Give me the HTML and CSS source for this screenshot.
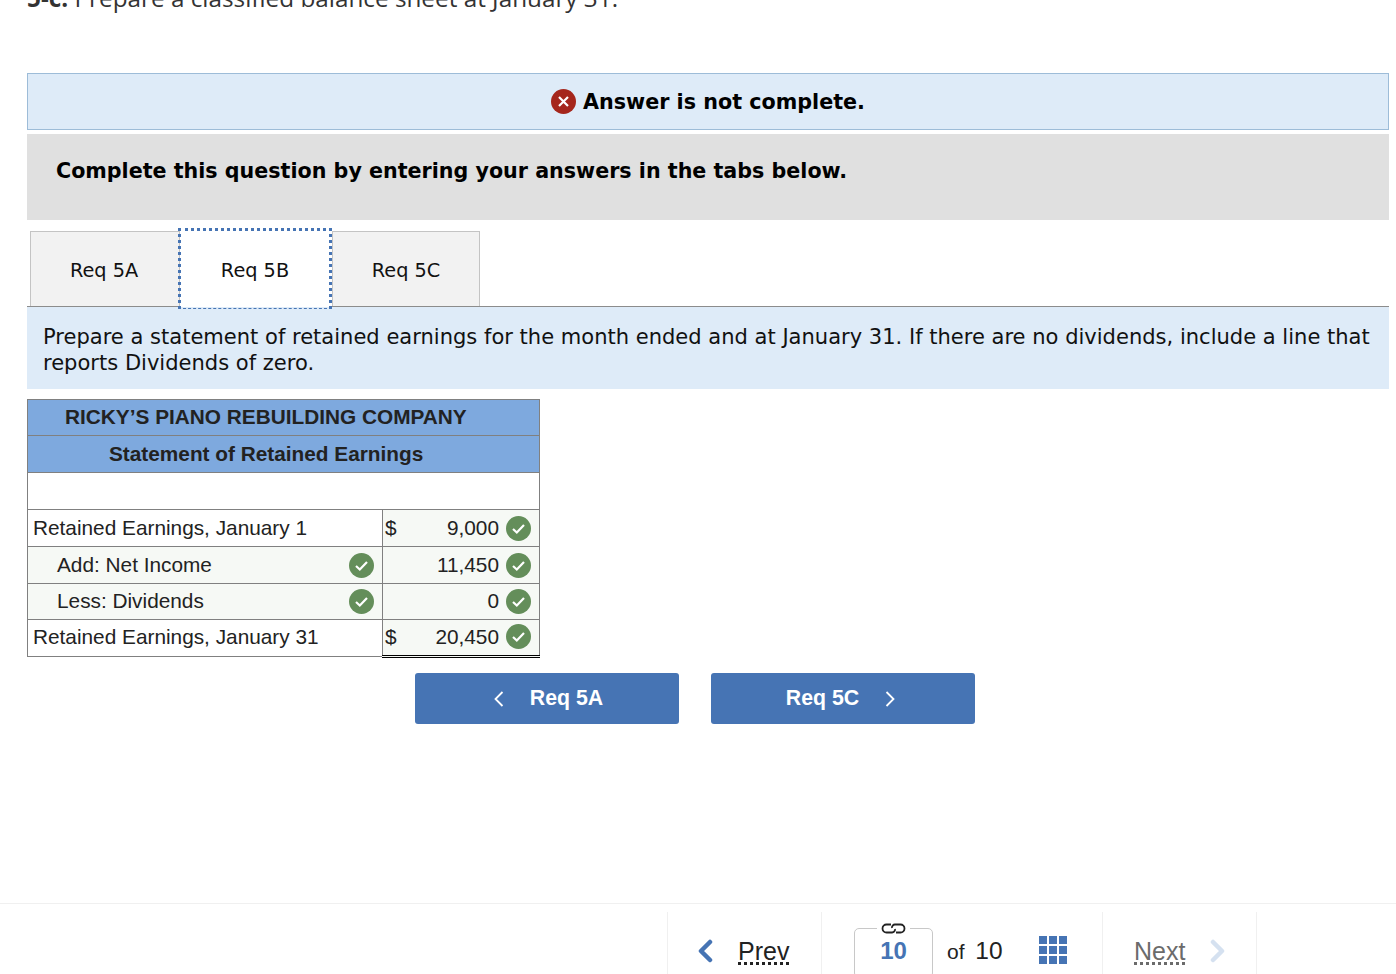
FILE: index.html
```html
<!DOCTYPE html>
<html>
<head>
  <title>Req 5B</title>
  <link rel="stylesheet" href="styles.css">
</head>
<body>

<div class="content">
  <p class="question"><b>5-c.</b> Prepare a classified balance sheet at January 31.</p>

  <div class="banner">
    <svg class="status-icon" width="25" height="25" viewBox="0 0 25 25">
      <circle cx="12.5" cy="12.5" r="12.5" fill="#a5261c"/>
      <path d="M8 8l9 9M17 8l-9 9" stroke="#fff" stroke-width="2.2" fill="none"/>
    </svg>
    <span>Answer is not complete.</span>
  </div>

  <div class="prompt">Complete this question by entering your answers in the tabs below.</div>

  <div class="tabs">
    <div class="tab">Req 5A</div>
    <div class="tab active">Req 5B</div>
    <div class="tab">Req 5C</div>
  </div>

  <div class="instructions">Prepare a statement of retained earnings for the month ended and at January 31. If there are no dividends, include a line that reports Dividends of zero.</div>

  <table class="statement">
    <colgroup>
      <col class="col-label">
      <col class="col-amount">
    </colgroup>
    <tr class="head head-1"><th colspan="2"><span class="company">RICKY’S PIANO REBUILDING COMPANY</span></th></tr>
    <tr class="head head-2"><th colspan="2"><span class="title">Statement of Retained Earnings</span></th></tr>
    <tr class="blank"><td colspan="2"></td></tr>
    <tr>
      <td class="label">Retained Earnings, January 1</td>
      <td class="amount tint"><div class="amount-in"><span class="cur">$</span><span class="num">9,000</span><svg class="ok" viewBox="0 0 25 25"><use href="#check"/></svg></div></td>
    </tr>
    <tr class="tint">
      <td class="label indent"><div class="label-in"><span>Add: Net Income</span><svg class="ok" viewBox="0 0 25 25"><use href="#check"/></svg></div></td>
      <td class="amount"><div class="amount-in"><span class="num">11,450</span><svg class="ok" viewBox="0 0 25 25"><use href="#check"/></svg></div></td>
    </tr>
    <tr class="tint short">
      <td class="label indent"><div class="label-in"><span>Less: Dividends</span><svg class="ok" viewBox="0 0 25 25"><use href="#check"/></svg></div></td>
      <td class="amount"><div class="amount-in"><span class="num">0</span><svg class="ok" viewBox="0 0 25 25"><use href="#check"/></svg></div></td>
    </tr>
    <tr class="last">
      <td class="label"><span>Retained Earnings, January 31</span></td>
      <td class="amount tint total"><div class="amount-in"><span class="cur">$</span><span class="num">20,450</span><svg class="ok" viewBox="0 0 25 25"><use href="#check"/></svg></div></td>
    </tr>
  </table>

  <div class="req-nav">
    <button class="req-btn back">
      <svg width="10" height="16" viewBox="0 0 10 16"><path d="M8.5 1L1.5 8l7 7" stroke="#fff" stroke-width="1.8" fill="none"/></svg>
      <span>Req 5A</span>
    </button>
    <button class="req-btn forward">
      <span>Req 5C</span>
      <svg width="10" height="16" viewBox="0 0 10 16"><path d="M1.5 1l7 7-7 7" stroke="#fff" stroke-width="1.8" fill="none"/></svg>
    </button>
  </div>
</div>

<footer class="pager">
  <div class="pager-cell prev">
    <svg width="16" height="24" viewBox="0 0 16 24"><path d="M13 3L4 12l9 9" stroke="#4674b4" stroke-width="4.5" stroke-linecap="round" stroke-linejoin="round" fill="none"/></svg>
    <span class="pager-link">Prev</span>
  </div>
  <div class="pager-cell pages">
    <div class="page-box">
      <svg class="link-icon" width="33" height="13" viewBox="0 0 33 13"><path d="M14 2.500H9.500a4 4 0 0 0 0 8H15a3 3 0 0 0 3-3.500M19 10.500h4.500a4 4 0 0 0 0-8H18a3 3 0 0 0-3 3.500" stroke="#222" stroke-width="1.800" fill="none"/></svg>
      <span>10</span>
    </div>
    <span class="of"><small>of</small> 10</span>
    <svg class="grid-icon" width="28" height="28" viewBox="0 0 28 28" fill="#4674b4">
      <rect width="8" height="8"/><rect x="10" width="8" height="8"/><rect x="20" width="8" height="8"/>
      <rect y="10" width="8" height="8"/><rect x="10" y="10" width="8" height="8"/><rect x="20" y="10" width="8" height="8"/>
      <rect y="20" width="8" height="8"/><rect x="10" y="20" width="8" height="8"/><rect x="20" y="20" width="8" height="8"/>
    </svg>
  </div>
  <div class="pager-cell next">
    <span class="pager-link">Next</span>
    <svg width="16" height="24" viewBox="0 0 16 24"><path d="M3 3l9 9-9 9" stroke="#d5e1f0" stroke-width="4.500" stroke-linecap="round" stroke-linejoin="round" fill="none"/></svg>
  </div>
</footer>

<svg class="defs" width="0" height="0">
  <symbol id="check" viewBox="0 0 25 25">
    <circle cx="12.500" cy="12.500" r="12.500" fill="#648e5a"/>
    <path d="M7 13l3.800 3.500L18 9" stroke="#fff" stroke-width="2.200" fill="none"/>
  </symbol>
</svg>

</body>
</html>
```

FILE: styles.css
```css
html, body {
  margin: 0;
  height: 974px;
  overflow: hidden;
  background: white;
  color: #1a1a1a;
}

body {
  font-family: "DejaVu Sans", sans-serif;
  position: relative;
}

.content {
  padding: 0 7px 0 27px;
}

.question {
  margin: -14px 0 0 0;
  height: 87px;
  font-family: "Open Sans", sans-serif;
  font-size: 24.300px;
  line-height: 24px;
  color: #333;
}

.banner {
  height: 55px;
  background: #deebf8;
  border: 1px solid #9dbcd8;
  display: flex;
  align-items: center;
  justify-content: center;
  gap: 7px;
  font-size: 20.700px;
  font-weight: bold;
  color: black;
}

.prompt {
  margin-top: 4px;
  height: 86px;
  box-sizing: border-box;
  padding: 23px 29px;
  background: #e0e0e0;
  font-size: 20.650px;
  line-height: 28px;
  font-weight: bold;
  color: black;
}

.tabs {
  display: flex;
  margin-top: 11px;
  padding-left: 3px;
  height: 75px;
  border-bottom: 1px solid #8c8c8c;
}

.tab {
  width: 150px;
  box-sizing: border-box;
  margin-right: 1px;
  background: #f2f2f2;
  border: 1px solid #c4c4c4;
  border-bottom: none;
  text-align: center;
  font-size: 19.300px;
  line-height: 77px;
  color: #111;
}

.tab:first-child {
  padding-right: 2px;
}

.tab:nth-child(3) {
  width: 148px;
  margin-right: 0;
}

.tab.active {
  background: white;
  position: relative;
  z-index: 1;
  width: 148px;
  height: 76px;
  line-height: 79px;
  margin-right: 3px;
  border: none;
}

/* focus ring: heavy dots on three sides, thin dashes along the bottom */
.tab.active::after {
  content: "";
  position: absolute;
  inset: -3px -3px -2px -3px;
  border: 3px dotted #4674b4;
  border-bottom: 1px dashed #4674b4;
}

.instructions {
  background: #deebf8;
  height: 82px;
  box-sizing: border-box;
  padding: 17px 16px 0;
  font-size: 21.040px;
  line-height: 26px;
  color: #111;
}

.statement {
  margin-top: 10px;
  border-collapse: collapse;
  table-layout: fixed;
  width: 513px;
  font-family: "Liberation Sans", sans-serif;
  font-size: 20.800px;
  color: #222;
}

.col-label { width: 355px; }

.statement th, .statement td {
  border: 1px solid #808080;
  padding: 0;
}

.head th {
  background: #7ea9de;
  font-size: 20.800px;
  font-weight: bold;
  text-align: left;
}

.head-1 th { height: 33px; padding-bottom: 2px; }
.head-2 th { height: 36px; }

.company { margin-left: 37px; }
.title { margin-left: 81px; }

.blank td { background: white; }

.statement tr > td { height: 36px; }
.statement tr.short > td { height: 35px; }
.statement tr.last > td { height: 35px; }

.label { padding-left: 5px !important; }
.label.indent { padding-left: 29px !important; }

.short .label-in span, .short .num { position: relative; top: -1px; }
.last .label span, .last .amount-in { position: relative; top: -1px; }

.tint { background: #f6f9f5; }

.label-in, .amount-in {
  display: flex;
  align-items: center;
}

.label-in {
  justify-content: space-between;
  padding-right: 8px;
}

.amount-in { padding: 0 8px 0 2px; }
.num { margin-left: auto; margin-right: 7px; }

.ok {
  width: 25px;
  height: 25px;
  flex: none;
}

.statement td.amount.total {
  border-top: 1px solid black;
  border-bottom: 3px double black;
}

.req-nav {
  display: flex;
  gap: 32px;
  margin: 15px 0 0 388px;
}

.req-btn {
  width: 264px;
  height: 51px;
  background: #4674b4;
  border: none;
  border-radius: 3px;
  color: white;
  font-family: "Liberation Sans", sans-serif;
  font-size: 21.300px;
  font-weight: bold;
  display: flex;
  align-items: center;
  justify-content: center;
  gap: 26px;
}

.req-btn.back { padding-left: 9px; }
.req-btn.forward { padding-right: 11px; }

.pager {
  position: absolute;
  left: 0;
  right: 0;
  top: 903px;
  height: 71px;
  box-sizing: border-box;
  border-top: 1px solid #f0f0f0;
  padding: 8px 0 0 667px;
  display: flex;
  font-family: "Liberation Sans", sans-serif;
  overflow: hidden;
}

.pager-cell {
  display: flex;
  align-items: center;
  height: 64px;
  box-sizing: border-box;
  border-left: 1px solid #f0f0f0;
}

.prev { width: 154px; padding: 13px 0 0 29px; gap: 25px; }
.pages { width: 281px; padding-top: 13px; position: relative; }
.next {
  width: 155px;
  padding: 13px 0 0 31px;
  gap: 25px;
  border-right: 1px solid #f0f0f0;
  color: #6b6b6b;
}

.pager-link {
  font-size: 25px;
  line-height: 29px;
  border-bottom: 3px dotted currentColor;
  height: 25px;
}

.prev .pager-link { color: #222; }

.page-box {
  position: relative;
  align-self: flex-start;
  margin-left: 32px;
  margin-top: 3px;
  width: 79px;
  height: 50px;
  box-sizing: border-box;
  border: 1px solid #c8c8c8;
  border-radius: 5px;
  text-align: center;
  color: #4674b4;
  font-size: 24px;
  font-weight: bold;
  padding-top: 8px;
}

.link-icon {
  position: absolute;
  top: -7px;
  left: 22px;
  background: white;
}

.of {
  font-size: 24.500px;
  margin-left: 14px;
  color: #222;
}

.of small { font-size: 21px; margin-right: 4px; }

.grid-icon { margin-left: 36px; margin-bottom: 2px; }

.defs { position: absolute; }
```
